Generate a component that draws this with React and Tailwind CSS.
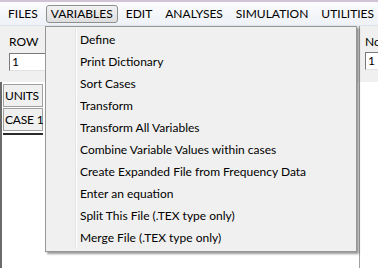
import { useState } from "react";

const menus = ["FILES", "VARIABLES", "EDIT", "ANALYSES", "SIMULATION", "UTILITIES"];

const variableItems = [
  "Define",
  "Print Dictionary",
  "Sort Cases",
  "Transform",
  "Transform All Variables",
  "Combine Variable Values within cases",
  "Create Expanded File from Frequency Data",
  "Enter an equation",
  "Split This File (.TEX type only)",
  "Merge File (.TEX type only)",
];

function MenuBar({ open }) {
  return (
    <div className="h-[24px] flex items-center gap-[3px] pl-[3px] bg-gradient-to-b from-[#fbfcfd] to-[#eef1f6] border-b border-[#dfe3ea] whitespace-nowrap">
      {menus.map((m) => (
        <div
          key={m}
          className={
            m === open
              ? "h-[18px] flex items-center px-[4px] rounded-[3px] border border-[#8e8f8f] bg-gradient-to-b from-[#f2f2f2] to-[#dedede] text-black"
              : "h-[18px] flex items-center px-[4px] border border-transparent text-black"
          }
        >
          {m}
        </div>
      ))}
    </div>
  );
}

function SunkenInput({ value, className }) {
  return (
    <div
      className={
        "h-[18px] bg-white border border-t-[#7a7a7a] border-l-[#7a7a7a] border-r-[#e3e3e3] border-b-[#e3e3e3] flex items-center pl-[2px] " +
        className
      }
    >
      {value}
    </div>
  );
}

function Cell({ children }) {
  return (
    <div className="h-[23px] w-[40px] flex items-center pl-[1px] bg-[#f0f0f0] border border-[#a0a0a0] mt-[1px] whitespace-nowrap tracking-[-0.2px]">
      {children}
    </div>
  );
}

export default function App() {
  const [open] = useState("VARIABLES");

  return (
    <div
      className="relative w-[378px] h-[272px] overflow-hidden bg-white text-[12px] text-black"
      style={{ fontFamily: "Lato, 'Liberation Sans', sans-serif" }}
    >
      <div className="h-[268px] flex border-t-2 border-[#d3c3d7]">
        {/* parent window frame */}
        <div className="w-[3px] bg-[#cdbcd2]" />

        <div className="flex-1 flex flex-col">
          <MenuBar open={open} />

          {/* form panel */}
          <div className="h-[56px] flex justify-between bg-[#f0f0f0]">
            <div className="pl-[9px] pt-[10px] flex flex-col gap-[5px]">
              <span className="leading-[12px]">ROW</span>
              <SunkenInput value="1" className="w-[60px]" />
            </div>
            <div className="w-[20px] border-l border-[#a0a0a0] pl-[5px] pt-[10px] flex flex-col gap-[4px] overflow-hidden">
              <span className="leading-[12px] whitespace-nowrap">No</span>
              <SunkenInput value="1" className="w-[30px]" />
            </div>
          </div>

          {/* grid */}
          <div className="flex-1 flex">
            <div className="flex-1 flex flex-col border-l-2 border-[#6b6b6b] pl-[1px] pt-[1px]">
              <Cell>UNITS</Cell>
              <Cell>CASE 1</Cell>
              <div className="mt-[2px] w-[40px] border-t-2 border-[#2b2b2b]" />
            </div>
            <div className="w-[20px] border-l border-[#a0a0a0]" />
          </div>
        </div>
      </div>

      {/* dropdown */}
      <div className="absolute left-[45px] top-[26px] w-[312px] py-[2px] bg-[#f0f0f0] border border-[#979797] shadow-[2px_2px_2px_rgba(0,0,0,0.4)]">
        <div className="absolute left-[29px] top-[2px] bottom-[2px] w-[2px] border-l border-[#e2e3e3] bg-white" />
        {variableItems.map((it) => (
          <div key={it} className="h-[22px] flex items-center pl-[34px] whitespace-nowrap">
            {it}
          </div>
        ))}
      </div>
    </div>
  );
}
